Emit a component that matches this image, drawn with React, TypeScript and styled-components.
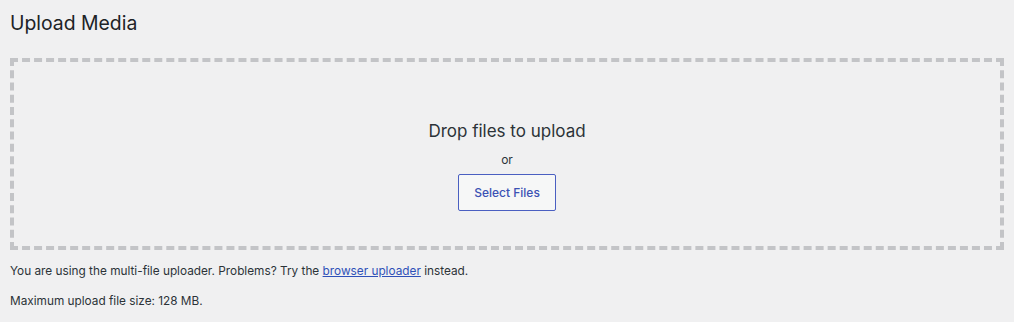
import React from "react";
import styled, { createGlobalStyle } from "styled-components";

const Global = createGlobalStyle`
  html, body { margin: 0; padding: 0; background: #f0f0f1; }
  body { font-family: Inter, "Noto Sans", "Liberation Sans", sans-serif; color: #1d2327; }
`;

const Page = styled.div`
  padding: 0 10px;
  width: 1014px;
  height: 322px;
  box-sizing: border-box;
`;

const Title = styled.h1`
  margin: 0;
  padding-top: 11px;
  font-size: 19.4px;
  line-height: 24px;
  font-weight: 400;
  color: #1d2327;
`;

const DropZone = styled.div`
  margin-top: 23px;
  height: 192px;
  box-sizing: border-box;
  border: 4px dashed #c3c4c7;
  padding-top: 57px;
  display: flex;
  flex-direction: column;
  align-items: center;
`;

const DropText = styled.p`
  margin: 0;
  font-size: 17px;
  line-height: 24px;
  color: #2c3338;
`;

const Or = styled.p`
  margin: 8px 0 0;
  font-size: 12px;
  line-height: 18px;
  color: #2c3338;
`;

const Button = styled.button`
  margin-top: 5px;
  width: 98px;
  height: 37px;
  border: 1px solid #4a5fc1;
  background: #f6f7f7;
  color: #3b52b4;
  font-family: inherit;
  font-size: 12px;
  font-weight: 500;
  border-radius: 2px;
  cursor: pointer;
`;

const Info = styled.p<{ $gap: number }>`
  margin: ${(p) => p.$gap}px 0 0;
  font-size: 11.8px;
  line-height: 18px;
  color: #2c3338;
`;

const Link = styled.a`
  color: #2f50b8;
  text-decoration: underline;
`;

export default function App() {
  return (
    <>
      <Global />
      <Page>
        <Title>Upload Media</Title>
        <DropZone>
          <DropText>Drop files to upload</DropText>
          <Or>or</Or>
          <Button>Select Files</Button>
        </DropZone>
        <Info $gap={12}>
          You are using the multi-file uploader. Problems? Try the{" "}
          <Link href="#">browser uploader</Link> instead.
        </Info>
        <Info $gap={12}>Maximum upload file size: 128 MB.</Info>
      </Page>
    </>
  );
}
